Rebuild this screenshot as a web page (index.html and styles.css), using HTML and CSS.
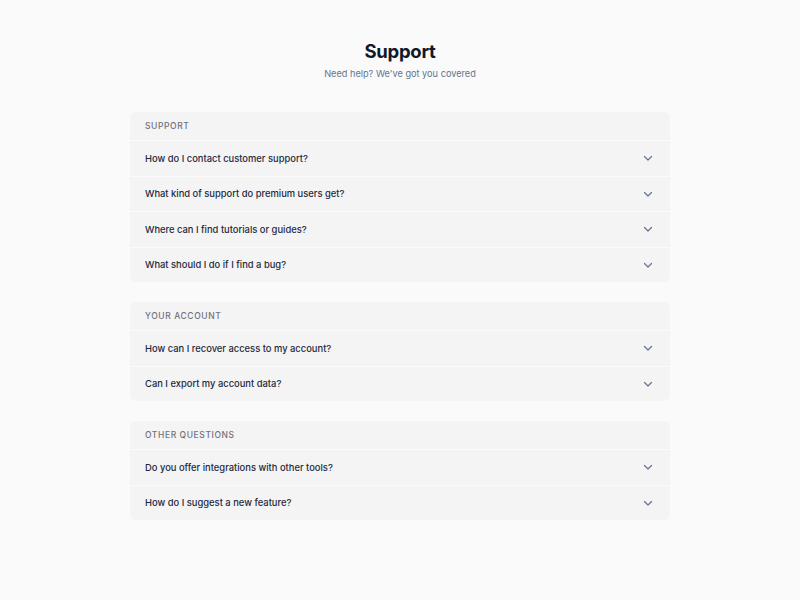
FILE: index.html
```html
<!DOCTYPE html>
<html lang="en">
<head>
  <meta charset="UTF-8" />
  <meta name="viewport" content="width=device-width, initial-scale=1.0"/>
  <title>Support</title>
  <link rel="stylesheet" href="styles.css">
</head>
<body>
  <div class="page">
    <header class="intro">
      <h1>Support</h1>
      <p>Need help? We've got you covered</p>
    </header>

    <section class="faq-group">
      <div class="group-title">Support</div>
      <div class="faq-item"><span>How do I contact customer support?</span><svg class="chev" viewBox="0 0 12 12"><path d="M2.5 4.5 6 8l3.5-3.5"/></svg></div>
      <div class="faq-item"><span>What kind of support do premium users get?</span><svg class="chev" viewBox="0 0 12 12"><path d="M2.5 4.5 6 8l3.5-3.5"/></svg></div>
      <div class="faq-item"><span>Where can I find tutorials or guides?</span><svg class="chev" viewBox="0 0 12 12"><path d="M2.5 4.5 6 8l3.5-3.5"/></svg></div>
      <div class="faq-item"><span>What should I do if I find a bug?</span><svg class="chev" viewBox="0 0 12 12"><path d="M2.5 4.5 6 8l3.5-3.5"/></svg></div>
    </section>

    <section class="faq-group">
      <div class="group-title">Your account</div>
      <div class="faq-item"><span>How can I recover access to my account?</span><svg class="chev" viewBox="0 0 12 12"><path d="M2.5 4.5 6 8l3.5-3.5"/></svg></div>
      <div class="faq-item"><span>Can I export my account data?</span><svg class="chev" viewBox="0 0 12 12"><path d="M2.5 4.5 6 8l3.5-3.5"/></svg></div>
    </section>

    <section class="faq-group">
      <div class="group-title">Other questions</div>
      <div class="faq-item"><span>Do you offer integrations with other tools?</span><svg class="chev" viewBox="0 0 12 12"><path d="M2.5 4.5 6 8l3.5-3.5"/></svg></div>
      <div class="faq-item"><span>How do I suggest a new feature?</span><svg class="chev" viewBox="0 0 12 12"><path d="M2.5 4.5 6 8l3.5-3.5"/></svg></div>
    </section>
  </div>
</body>
</html>
```

FILE: styles.css
```css
body {
  font-family: Inter, "Noto Sans", sans-serif;
  background: #fafafa;
  margin: 0;
  color: #1f2937;
}

.page {
  width: 540px;
  margin: 0 auto;
  padding-top: 38px;
}

.intro {
  text-align: center;
  margin-bottom: 31px;
}

.intro h1 {
  font-size: 18.5px;
  font-weight: 700;
  line-height: 26px;
  margin: 0 0 3px;
  color: #111827;
  letter-spacing: -0.015em;
}

.intro p {
  font-size: 9.2px;
  line-height: 14px;
  margin: 0;
  color: #64748b;
}

.faq-group {
  background: #f4f4f5;
  border-radius: 6px;
  margin-bottom: 20px;
  overflow: hidden;
}

.group-title {
  height: 28px;
  line-height: 28px;
  padding: 0 15px;
  font-size: 8.5px;
  font-weight: 500;
  text-transform: uppercase;
  letter-spacing: 0.07em;
  color: #71717a;
}

.faq-item {
  display: flex;
  align-items: center;
  justify-content: space-between;
  height: 34.5px;
  padding: 0 15px;
  border-top: 1px solid #fbfbfb;
  font-size: 9.4px;
  font-weight: 500;
  color: #1e293b;
}

.chev {
  width: 12px;
  height: 12px;
  margin-right: 1px;
  fill: none;
  stroke: #64748b;
  stroke-width: 1.2;
  stroke-linecap: round;
  stroke-linejoin: round;
}
```
